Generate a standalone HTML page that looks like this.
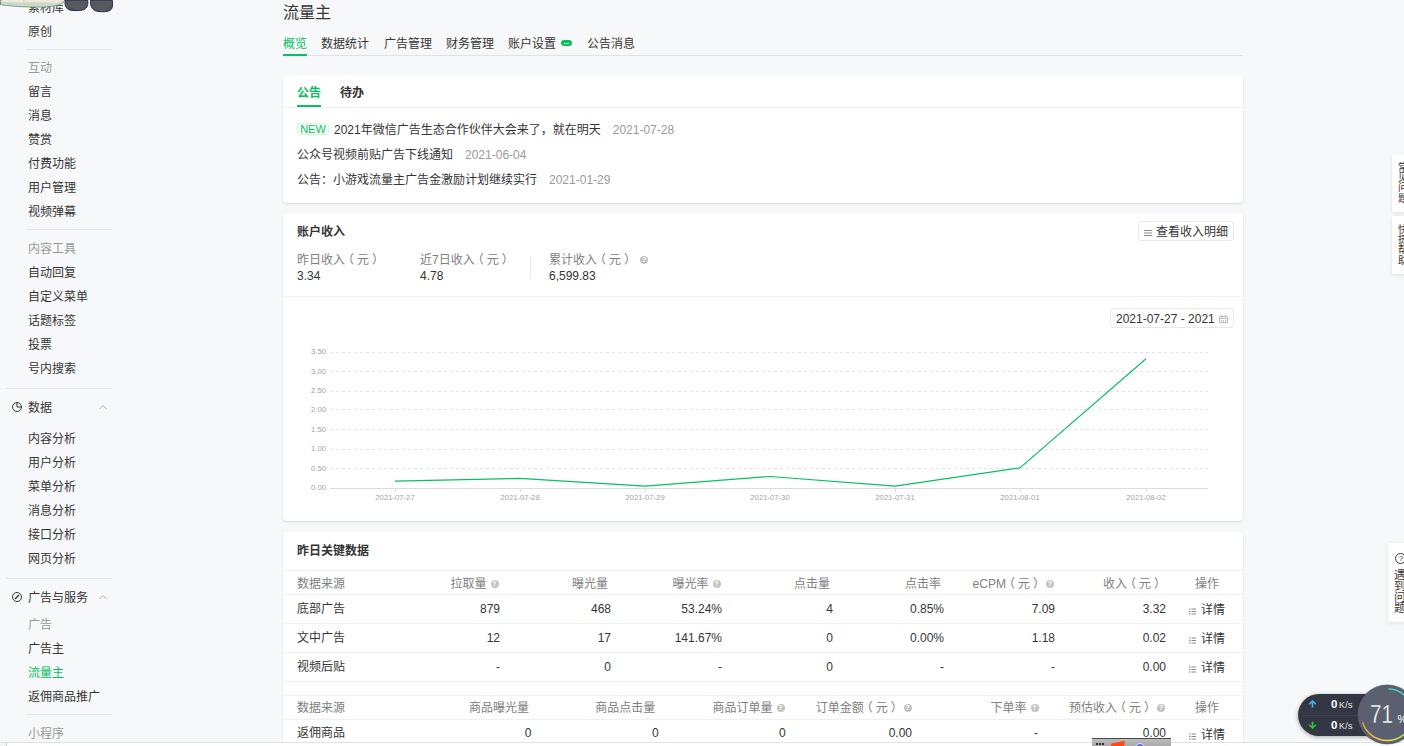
<!DOCTYPE html>
<html lang="zh-CN">
<head>
<meta charset="utf-8">
<title>流量主</title>
<style>
*{box-sizing:border-box;margin:0;padding:0}
html,body{width:1404px;height:746px;overflow:hidden}
body{background:#f6f8f9;font-family:"Liberation Sans","Noto Sans CJK SC",sans-serif;font-size:12px;color:#353535;position:relative}
.abs{position:absolute}
/* sidebar */
#side{position:absolute;left:0;top:0;width:120px;height:746px}
#side .it{position:absolute;left:28px;margin-top:1px;height:16px;line-height:16px;white-space:nowrap;color:#353535}
#side .gr{color:#9a9a9a}
#side .on{color:#07c160}
#side .hr{position:absolute;height:1px;background:#e3e5e6;right:8px}
/* main */
#title{position:absolute;left:283px;top:2px;font-size:16px;line-height:22px;color:#353535}
#tabs{position:absolute;left:283px;top:31px;width:960px;height:25px;border-bottom:1px solid #e0e2e3}
#tabs span{position:absolute;top:4px;line-height:18px;white-space:nowrap;color:#353535}
.card{position:absolute;left:283px;width:960px;background:#fff;border-radius:4px;box-shadow:0 1px 2px rgba(150,150,150,.3)}
.b{font-weight:bold}
.t{position:absolute;margin-top:1px;white-space:nowrap;line-height:16px;height:16px}
.g{color:#9a9a9a}
.q{display:inline-block;width:8px;height:8px;border-radius:50%;background:#c3c3c3;color:#fff;font-size:7px;line-height:8px;text-align:center;font-weight:bold;vertical-align:2px;margin-left:4px;font-family:"Liberation Sans",sans-serif}
.hl{position:absolute;left:0;width:960px;height:1px;background:#eff0f1}
.new{display:inline-block;width:32px;height:12px;line-height:10px;font-size:11px;text-align:center;border:1px solid #d6f3e3;background:#f6fdf9;border-radius:3px;color:#07c160;margin-right:5px;vertical-align:1px}
.g2{color:#7e8081}
.btn{position:absolute;border:1px solid #e7e8e9;border-radius:3px;background:#fff;display:flex;align-items:center;justify-content:center;white-space:nowrap;line-height:16px}
.tr{position:absolute;left:0;width:960px;border-top:1px solid #eff0f1}
.tr .c{position:absolute;top:50%;margin-top:-7px;height:16px;line-height:16px;white-space:nowrap}
.th{color:#7e8081}
.pl{position:relative;left:-3px}
.pr{position:relative;left:3px}
.fl{position:absolute;background:#fff;border-radius:2px;box-shadow:0 1px 4px rgba(0,0,0,.1)}
.v{position:absolute;word-break:break-all;white-space:normal;color:#353535}
.nw{color:#e8e8e8;font-size:9px;line-height:14px;white-space:nowrap;letter-spacing:.2px}
.nw b{font-size:11.5px;margin-right:1.5px;color:#fff}
</style>
</head>
<body>
<div id="side">
<div class="it" style="top:-1px">素材库</div>
<div class="it" style="top:23px">原创</div>
<div class="it gr" style="top:59px">互动</div>
<div class="it" style="top:83px">留言</div>
<div class="it" style="top:107px">消息</div>
<div class="it" style="top:131px">赞赏</div>
<div class="it" style="top:155px">付费功能</div>
<div class="it" style="top:179px">用户管理</div>
<div class="it" style="top:203px">视频弹幕</div>
<div class="it gr" style="top:240px">内容工具</div>
<div class="it" style="top:264px">自动回复</div>
<div class="it" style="top:288px">自定义菜单</div>
<div class="it" style="top:312px">话题标签</div>
<div class="it" style="top:336px">投票</div>
<div class="it" style="top:360px">号内搜索</div>
<div class="it" style="top:399px">数据</div>
<div class="it" style="top:430px">内容分析</div>
<div class="it" style="top:454px">用户分析</div>
<div class="it" style="top:478px">菜单分析</div>
<div class="it" style="top:502px">消息分析</div>
<div class="it" style="top:526px">接口分析</div>
<div class="it" style="top:550px">网页分析</div>
<div class="it" style="top:589px">广告与服务</div>
<div class="it gr" style="top:616px">广告</div>
<div class="it" style="top:640px">广告主</div>
<div class="it on" style="top:664px">流量主</div>
<div class="it" style="top:688px">返佣商品推广</div>
<div class="it gr" style="top:725px">小程序</div>
<div class="hr" style="left:27px;top:49px"></div>
<div class="hr" style="left:27px;top:229px"></div>
<div class="hr" style="left:6px;top:388px"></div>
<div class="hr" style="left:6px;top:578px"></div>
<div class="hr" style="left:27px;top:714px"></div>
<svg class="abs" style="left:11px;top:401px" width="12" height="12" viewBox="0 0 12 12"><circle cx="6" cy="6" r="4.5" fill="none" stroke="#353535" stroke-width="1"/><path d="M6 1.5V6H10.5" fill="none" stroke="#353535" stroke-width="1"/></svg>
<svg class="abs" style="left:11px;top:591px" width="12" height="12" viewBox="0 0 12 12"><circle cx="6" cy="6" r="4.5" fill="none" stroke="#353535" stroke-width="1"/><path d="M4 8L8 4" fill="none" stroke="#353535" stroke-width="1.4"/></svg>
<svg class="abs" style="left:98px;top:404px" width="10" height="6" viewBox="0 0 10 6"><path d="M1.5 5L5 1.5L8.5 5" fill="none" stroke="#b2b2b2" stroke-width="1"/></svg>
<svg class="abs" style="left:98px;top:594px" width="10" height="6" viewBox="0 0 10 6"><path d="M1.5 5L5 1.5L8.5 5" fill="none" stroke="#b2b2b2" stroke-width="1"/></svg>
</div>
<div id="title">流量主</div>
<div id="tabs">
<span style="left:0;color:#07c160">概览</span>
<span style="left:38px">数据统计</span>
<span style="left:101px">广告管理</span>
<span style="left:163px">财务管理</span>
<span style="left:225px">账户设置</span>
<i class="abs" style="left:278px;top:9px;width:11px;height:6px;border-radius:3px;background:#07c160"></i>
<i class="abs" style="left:281px;top:11.5px;width:5px;height:1px;background:#d6f3e3"></i>
<span style="left:304px">公告消息</span>
<i class="abs" style="left:0;top:23px;width:24px;height:2px;background:#07c160"></i>
</div>
<div class="card" id="c1" style="top:75px;height:128px">
<div class="t b" style="left:14px;top:9px;color:#07c160">公告</div>
<div class="t b" style="left:57px;top:9px">待办</div>
<div class="hl" style="top:32px"></div>
<i class="abs" style="left:14px;top:30px;width:24px;height:2px;background:#07c160"></i>
<div class="t" style="left:14px;top:46px"><span class="new">NEW</span>2021年微信广告生态合作伙伴大会来了，就在明天<span class="g" style="margin-left:12px">2021-07-28</span></div>
<div class="t" style="left:14px;top:71px">公众号视频前贴广告下线通知<span class="g" style="margin-left:12px">2021-06-04</span></div>
<div class="t" style="left:14px;top:96px">公告：小游戏流量主广告金激励计划继续实行<span class="g" style="margin-left:12px">2021-01-29</span></div>
</div>
<div class="card" id="c2" style="top:213px;height:308px">
<div class="t b" style="left:14px;top:10px">账户收入</div>
<div class="btn" style="left:855px;top:8px;width:96px;height:20px;padding-top:2px"><svg width="8" height="6" viewBox="0 0 8 6" style="margin-right:4px;margin-top:2px"><path d="M0 .5H8M0 3H8M0 5.5H8" stroke="#8a8a8a" stroke-width="1"/></svg>查看收入明细</div>
<div class="t g2" style="left:14px;top:38px">昨日收入<span class="pl">（</span>元<span class="pr">）</span></div>
<div class="t" style="left:14px;top:54px">3.34</div>
<div class="t g2" style="left:137px;top:38px">近7日收入<span class="pl">（</span>元<span class="pr">）</span></div>
<div class="t" style="left:137px;top:54px">4.78</div>
<i class="abs" style="left:247px;top:43px;width:1px;height:22px;background:#e7e8e9"></i>
<div class="t g2" style="left:266px;top:38px">累计收入<span class="pl">（</span>元<span class="pr">）</span><span class="q" style="margin-left:7px">?</span></div>
<div class="t" style="left:266px;top:54px">6,599.83</div>
<div class="hl" style="top:83px"></div>
<div class="btn" style="left:827px;top:95px;width:124px;height:20px;justify-content:flex-start;padding-left:5px;padding-top:1px">2021-07-27 - 2021<svg width="9" height="9" viewBox="0 0 9 9" style="margin-left:4px"><path d="M.5 2.5H8.5V8.5H.5ZM.5 4.5H8.5M2.5 1V3M6.5 1V3M2.5 6V7.5M4.5 6V7.5M6.5 6V7.5" fill="none" stroke="#b8b8b8" stroke-width="1"/></svg></div>
<svg class="abs" style="left:0;top:83px" width="960" height="225" viewBox="283 296 960 225" font-family="Liberation Sans, sans-serif" font-size="7.7" fill="#a3a3a3"><line x1="330" x2="1208" y1="352.5" y2="352.5" stroke="#e3e3e3" stroke-width="1" stroke-dasharray="3 3"/><text x="326" y="354" text-anchor="end">3.50</text><line x1="330" x2="1208" y1="371.5" y2="371.5" stroke="#e3e3e3" stroke-width="1" stroke-dasharray="3 3"/><text x="326" y="374" text-anchor="end">3.00</text><line x1="330" x2="1208" y1="391.5" y2="391.5" stroke="#e3e3e3" stroke-width="1" stroke-dasharray="3 3"/><text x="326" y="393" text-anchor="end">2.50</text><line x1="330" x2="1208" y1="409.5" y2="409.5" stroke="#e3e3e3" stroke-width="1" stroke-dasharray="3 3"/><text x="326" y="412" text-anchor="end">2.00</text><line x1="330" x2="1208" y1="429.5" y2="429.5" stroke="#e3e3e3" stroke-width="1" stroke-dasharray="3 3"/><text x="326" y="432" text-anchor="end">1.50</text><line x1="330" x2="1208" y1="449.5" y2="449.5" stroke="#e3e3e3" stroke-width="1" stroke-dasharray="3 3"/><text x="326" y="451" text-anchor="end">1.00</text><line x1="330" x2="1208" y1="468.5" y2="468.5" stroke="#e3e3e3" stroke-width="1" stroke-dasharray="3 3"/><text x="326" y="471" text-anchor="end">0.50</text><line x1="330" x2="1208" y1="488.5" y2="488.5" stroke="#dcdcdc" stroke-width="1"/><text x="326" y="490" text-anchor="end">0.00</text><line x1="395.5" x2="395.5" y1="489" y2="492" stroke="#dcdcdc" stroke-width="1"/><text x="395" y="500" text-anchor="middle">2021-07-27</text><line x1="520.5" x2="520.5" y1="489" y2="492" stroke="#dcdcdc" stroke-width="1"/><text x="520" y="500" text-anchor="middle">2021-07-28</text><line x1="645.5" x2="645.5" y1="489" y2="492" stroke="#dcdcdc" stroke-width="1"/><text x="645" y="500" text-anchor="middle">2021-07-29</text><line x1="770.5" x2="770.5" y1="489" y2="492" stroke="#dcdcdc" stroke-width="1"/><text x="770" y="500" text-anchor="middle">2021-07-30</text><line x1="895.5" x2="895.5" y1="489" y2="492" stroke="#dcdcdc" stroke-width="1"/><text x="895" y="500" text-anchor="middle">2021-07-31</text><line x1="1020.5" x2="1020.5" y1="489" y2="492" stroke="#dcdcdc" stroke-width="1"/><text x="1020" y="500" text-anchor="middle">2021-08-01</text><line x1="1146.5" x2="1146.5" y1="489" y2="492" stroke="#dcdcdc" stroke-width="1"/><text x="1146" y="500" text-anchor="middle">2021-08-02</text><polyline points="395,481.1 520,478.4 645,486.2 770,476.5 895,486.2 1020,467.9 1146,358.7" fill="none" stroke="#07c160" stroke-width="1.2" stroke-linejoin="round"/></svg>
</div>
<div class="card" id="c3" style="top:532px;height:230px">
<div class="t b" style="left:14px;top:10px">昨日关键数据</div>
<div class="tr th" style="top:38px;height:24px"><span class="c" style="left:14px">数据来源</span><span class="c" style="right:744.5px">拉取量<span class="q">?</span></span><span class="c" style="right:635px">曝光量</span><span class="c" style="right:522.5px">曝光率<span class="q">?</span></span><span class="c" style="right:413px">点击量</span><span class="c" style="right:302px">点击率</span><span class="c" style="right:189px">eCPM<span class="pl">（</span>元<span class="pr">）</span><span class="q">?</span></span><span class="c" style="right:80px">收入<span class="pl">（</span>元<span class="pr">）</span></span><span class="c" style="left:912px">操作</span></div>
<div class="tr " style="top:62px;height:29px"><span class="c" style="margin-top:-8px;left:14px">底部广告</span><span class="c" style="margin-top:-8px;right:743px">879</span><span class="c" style="margin-top:-8px;right:632px">468</span><span class="c" style="margin-top:-8px;right:521px">53.24%</span><span class="c" style="margin-top:-8px;right:410px">4</span><span class="c" style="margin-top:-8px;right:299px">0.85%</span><span class="c" style="margin-top:-8px;right:188px">7.09</span><span class="c" style="margin-top:-8px;right:77px">3.32</span><span class="c" style="left:906px"><svg width="7" height="7" viewBox="0 0 7 7" style="margin-right:5px;position:relative;top:1px"><path d="M0 1H1.5M2.5 1H7M0 3.5H1.5M2.5 3.5H7M0 6H1.5M2.5 6H7" stroke="#8a8a8a" stroke-width="1"/></svg>详情</span></div>
<div class="tr " style="top:91px;height:29px"><span class="c" style="margin-top:-8px;left:14px">文中广告</span><span class="c" style="margin-top:-8px;right:743px">12</span><span class="c" style="margin-top:-8px;right:632px">17</span><span class="c" style="margin-top:-8px;right:521px">141.67%</span><span class="c" style="margin-top:-8px;right:410px">0</span><span class="c" style="margin-top:-8px;right:299px">0.00%</span><span class="c" style="margin-top:-8px;right:188px">1.18</span><span class="c" style="margin-top:-8px;right:77px">0.02</span><span class="c" style="left:906px"><svg width="7" height="7" viewBox="0 0 7 7" style="margin-right:5px;position:relative;top:1px"><path d="M0 1H1.5M2.5 1H7M0 3.5H1.5M2.5 3.5H7M0 6H1.5M2.5 6H7" stroke="#8a8a8a" stroke-width="1"/></svg>详情</span></div>
<div class="tr " style="top:120px;height:29px"><span class="c" style="margin-top:-8.5px;left:14px">视频后贴</span><span class="c" style="margin-top:-8.5px;right:743px">-</span><span class="c" style="margin-top:-8.5px;right:632px">0</span><span class="c" style="margin-top:-8.5px;right:521px">-</span><span class="c" style="margin-top:-8.5px;right:410px">0</span><span class="c" style="margin-top:-8.5px;right:299px">-</span><span class="c" style="margin-top:-8.5px;right:188px">-</span><span class="c" style="margin-top:-8.5px;right:77px">0.00</span><span class="c" style="left:906px"><svg width="7" height="7" viewBox="0 0 7 7" style="margin-right:5px;position:relative;top:1px"><path d="M0 1H1.5M2.5 1H7M0 3.5H1.5M2.5 3.5H7M0 6H1.5M2.5 6H7" stroke="#8a8a8a" stroke-width="1"/></svg>详情</span></div>
<div class="tr" style="top:149px;height:14px"></div>
<div class="tr th" style="top:163px;height:24px"><span class="c" style="margin-top:-7.7px;left:14px">数据来源</span><span class="c" style="margin-top:-7.7px;right:714px">商品曝光量</span><span class="c" style="margin-top:-7.7px;right:587.7px">商品点击量</span><span class="c" style="margin-top:-7.7px;right:458.5px">商品订单量<span class="q">?</span></span><span class="c" style="margin-top:-7.7px;right:331.3px">订单金额<span class="pl">（</span>元<span class="pr">）</span><span class="q">?</span></span><span class="c" style="margin-top:-7.7px;right:204.5px">下单率<span class="q">?</span></span><span class="c" style="margin-top:-7.7px;right:78px">预估收入<span class="pl">（</span>元<span class="pr">）</span><span class="q">?</span></span><span class="c" style="margin-top:-7.7px;left:912px">操作</span></div>
<div class="tr " style="top:187px;height:29px"><span class="c" style="margin-top:-8.7px;left:14px">返佣商品</span><span class="c" style="margin-top:-8.7px;right:711.5px">0</span><span class="c" style="margin-top:-8.7px;right:584.3px">0</span><span class="c" style="margin-top:-8.7px;right:457.3px">0</span><span class="c" style="margin-top:-8.7px;right:331px">0.00</span><span class="c" style="margin-top:-8.7px;right:205px">-</span><span class="c" style="margin-top:-8.7px;right:77px">0.00</span><span class="c" style="left:906px"><svg width="7" height="7" viewBox="0 0 7 7" style="margin-right:5px;position:relative;top:1px"><path d="M0 1H1.5M2.5 1H7M0 3.5H1.5M2.5 3.5H7M0 6H1.5M2.5 6H7" stroke="#8a8a8a" stroke-width="1"/></svg>详情</span></div>
</div>
<!--/c3-->
<!-- desktop pet sticker -->
<svg class="abs" style="left:0;top:0" width="120" height="14" viewBox="0 0 120 14">
<path d="M0 0H64.8C64.4 2 62.5 3.8 60 4.6C56.5 5.9 50 6.9 42 7.1C32 7.3 20 6.8 10 5.9C6 5.5 2 5 0 4.6Z" fill="#c9dacb" stroke="#6f8373" stroke-width=".7"/>
<path d="M2 0H64.2C63.6 1.2 62.3 2 60.5 2.6C58.5 3.2 56 3.1 54 2.8C46 2 38 2.3 30 2.3C22 2.5 14 2.5 2.2 2Z" fill="#efead9"/>
<path d="M24 0V1.2" stroke="#8a8f7e" stroke-width=".5"/>
<path d="M0 1.6C1.2 2.2 1.4 4 0 4.6Z" fill="#4f8f3f"/>
<path d="M65.3 0C64.6 4 65.2 7.6 68.5 9.6C71 10.9 81 11 84 9.6C87.6 7.8 88.4 4 87.6 0Z" fill="#58595b" stroke="#1f2b57" stroke-width="1"/>
<path d="M90.7 0C90.2 4.5 91 8.2 94.5 10.4C98 12.2 107 12.2 110 10.4C112.8 8.6 113 4.5 112.2 0Z" fill="#58595b" stroke="#1f2b57" stroke-width="1"/>
<path d="M70 7.2L71.3 9.6M73 8.2L73.8 10.3M107.5 8.6L106.3 10.8M110 6.5L109.2 8.8" stroke="#2b3a78" stroke-width=".6" fill="none"/>
</svg>
<!-- floating side buttons -->
<div class="fl" style="left:1392px;top:154px;width:20px;height:58px"><div class="v" style="left:6px;top:9px;font-size:10px;line-height:10.2px;width:10px">常见问题</div></div>
<div class="fl" style="left:1392px;top:216px;width:20px;height:58px"><div class="v" style="left:6px;top:9px;font-size:10px;line-height:10.2px;width:10px">快捷帮助</div></div>
<div class="fl" style="left:1388px;top:543px;width:24px;height:79px"><div class="abs" style="left:7px;top:10px;width:11px;height:11px;border:1px solid #353535;border-radius:50%;font-size:8px;line-height:9px;text-align:center;padding-left:1px">?</div><div class="v" style="left:6px;top:27px;font-size:11.5px;line-height:11.1px;width:12px">遇到问题</div></div>
<!-- bottom strip -->
<div class="abs" style="left:0;top:742px;width:1404px;height:4px;background:#fff;border-top:1px solid #e2e2e2"></div>
<div class="abs" style="left:0;top:743px;width:7px;height:3px;background:#f4f4f4;border-right:1px solid #d0d0d0"></div>
<div class="abs" style="left:1092px;top:738px;width:79px;height:8px;background:linear-gradient(#bdbdbd,#a9a9a9);border-top:1px solid #4a4a4a;overflow:hidden">
<i class="abs" style="left:4px;top:4px;width:2px;height:2px;background:#333;box-shadow:3px 0 #333,6px 0 #333"></i>
<i class="abs" style="left:19px;top:3px;width:13px;height:8px;background:#ff4a12;transform:skewX(-20deg) rotate(-12deg)"></i>
<i class="abs" style="left:43px;top:4px;width:10px;height:10px;border-radius:50%;background:#5a6fd0;border:1px solid #dfe3f5"></i>
</div>
<!-- net speed widget -->
<div class="abs" style="left:1298px;top:694px;width:90px;height:42px;border-radius:21px;background:#333743;box-shadow:0 1px 4px rgba(0,0,0,.35)">
<i class="abs" style="left:4px;top:20.5px;width:70px;height:1px;background:#3e424f"></i>
<svg class="abs" style="left:10px;top:6px" width="9" height="8" viewBox="0 0 9 8"><path d="M4.5 7.5V1.2M1.2 4.2L4.5 1L7.8 4.2" fill="none" stroke="#3db4f2" stroke-width="1.6"/></svg>
<svg class="abs" style="left:10px;top:27px" width="9" height="8" viewBox="0 0 9 8"><path d="M4.5 .5V6.8M1.2 3.8L4.5 7L7.8 3.8" fill="none" stroke="#2ec43e" stroke-width="1.6"/></svg>
<div class="abs nw" style="left:33px;top:3px"><b>0</b>K/s</div>
<div class="abs nw" style="left:33px;top:24px"><b>0</b>K/s</div>
</div>
<svg class="abs" style="left:1354px;top:681px" width="50" height="65" viewBox="1354 681 50 65">
<defs><linearGradient id="rg" x1="0" y1="0" x2="1" y2="0"><stop offset="0" stop-color="#f5a623"/><stop offset=".5" stop-color="#f0e040"/><stop offset="1" stop-color="#8fe060"/></linearGradient></defs>
<circle cx="1387.2" cy="714.5" r="30.5" fill="rgba(0,0,0,.12)"/>
<circle cx="1387.2" cy="714.5" r="29.7" fill="#5b6070"/>
<path d="M1388.5 688.7A25.8 25.8 0 0 1 1413 714.5" fill="none" stroke="#3fd8c8" stroke-width="1.4"/>
<path d="M1362.6 722.4A25.8 25.8 0 0 0 1412 722" fill="none" stroke="url(#rg)" stroke-width="1.4"/>
<text x="1370" y="723" font-family="Liberation Sans, sans-serif" font-size="25" fill="#fff" stroke="#5b6070" stroke-width=".35" textLength="23" lengthAdjust="spacingAndGlyphs">71</text>
<text x="1397.5" y="723" font-family="Liberation Sans, sans-serif" font-size="10.5" fill="#fff">%</text>
</svg>
</body>
</html>
